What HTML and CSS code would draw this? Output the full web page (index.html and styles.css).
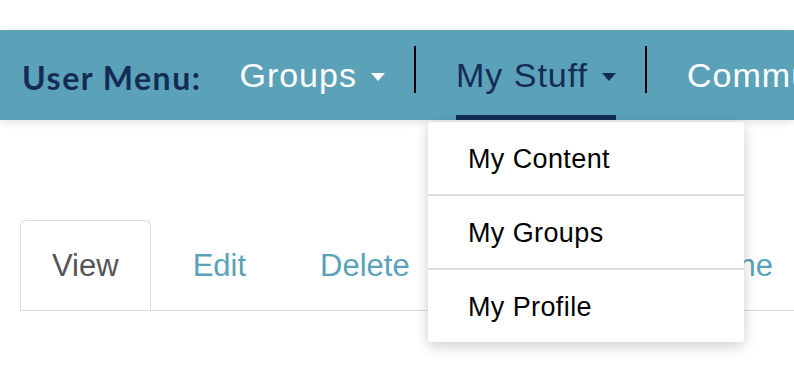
FILE: index.html
```html
<!DOCTYPE html>
<html lang="en">
<head>
    <meta charset="UTF-8">
    <meta name="viewport" content="width=device-width, initial-scale=1.0">
    <title>My Stuff</title>
    <link rel="stylesheet" href="styles.css">
</head>
<body>
    <header class="user-bar">
        <span class="user-bar-label">User Menu:</span>
        <nav class="user-nav">
            <div class="nav-item">
                <a class="nav-link" href="#">Groups <span class="caret"></span></a>
            </div>
            <div class="nav-sep"></div>
            <div class="nav-item open">
                <a class="nav-link active" href="#">My Stuff <span class="caret"></span></a>
                <ul class="dropdown">
                    <li><a href="#">My Content</a></li>
                    <li><a href="#">My Groups</a></li>
                    <li><a href="#">My Profile</a></li>
                </ul>
            </div>
            <div class="nav-sep"></div>
            <div class="nav-item">
                <a class="nav-link" href="#">Community</a>
            </div>
        </nav>
    </header>

    <main class="content">
        <ul class="tabs">
            <li class="tab active"><a href="#">View</a></li>
            <li class="tab"><a href="#">Edit</a></li>
            <li class="tab"><a href="#">Delete</a></li>
            <li class="tab"><a href="#">Revisions</a></li>
            <li class="tab"><a href="#">Clone</a></li>
        </ul>
    </main>
</body>
</html>
```

FILE: styles.css
```css
html {
    overflow: hidden;
}

body {
    margin: 0;
    min-height: 376px;
    font-family: "Liberation Sans", Arial, sans-serif;
    background-color: white;
}

a {
    text-decoration: none;
}

.user-bar {
    margin-top: 30px;
    height: 90px;
    display: flex;
    align-items: stretch;
    padding-left: 22px;
    background-color: #5ba2b9;
    box-shadow: 0 2px 8px rgba(0, 0, 0, 0.12);
    white-space: nowrap;
    position: relative;
    z-index: 2;
}

.user-bar-label {
    align-self: center;
    padding-top: 4px;
    font-family: Lato, sans-serif;
    font-weight: 700;
    font-size: 32px;
    letter-spacing: 1.5px;
    color: #142c55;
    margin-right: 38px;
}

.user-nav {
    display: flex;
    align-items: stretch;
}

.nav-item {
    position: relative;
    display: flex;
    padding-right: 29px;
}

.nav-sep + .nav-item {
    padding-left: 40px;
}

.nav-link {
    display: flex;
    align-items: center;
    font-size: 34px;
    letter-spacing: 1px;
    color: white;
    border-top: 5px solid transparent;
    border-bottom: 5px solid transparent;
}

.nav-link.active {
    color: #142c55;
    border-bottom-color: #142c55;
}

.caret {
    display: inline-block;
    margin-left: 14px;
    margin-top: 4px;
    border-left: 7px solid transparent;
    border-right: 7px solid transparent;
    border-top: 8px solid currentColor;
}

.nav-sep {
    align-self: flex-start;
    margin-top: 16px;
    width: 2px;
    height: 47px;
    background-color: #000;
}

.dropdown {
    position: absolute;
    top: 100%;
    left: 12px;
    margin: 2px 0 0;
    padding: 0;
    list-style: none;
    width: 316px;
    background-color: white;
    border-radius: 3px;
    box-shadow: 0 4px 14px rgba(0, 0, 0, 0.2);
}

.dropdown li + li {
    border-top: 2px solid #dedede;
}

.dropdown a {
    display: block;
    height: 70px;
    padding: 2px 0 0 40px;
    line-height: 70px;
    font-size: 27px;
    letter-spacing: 0.4px;
    color: #000;
}

.content {
    padding: 100px 0 0 20px;
}

.tabs {
    display: flex;
    margin: 0;
    padding: 0;
    list-style: none;
    border-bottom: 1px solid #ddd;
    white-space: nowrap;
}

.tab {
    margin-right: 10px;
    border: 1px solid transparent;
    border-bottom: none;
    border-radius: 6px 6px 0 0;
}

.tab a {
    display: block;
    padding: 0 31px;
    height: 89px;
    line-height: 89px;
    font-size: 31px;
    color: #5ba2b9;
}

.tab.active {
    border-color: #ddd;
}

.tab.active a {
    color: #555;
}
```
